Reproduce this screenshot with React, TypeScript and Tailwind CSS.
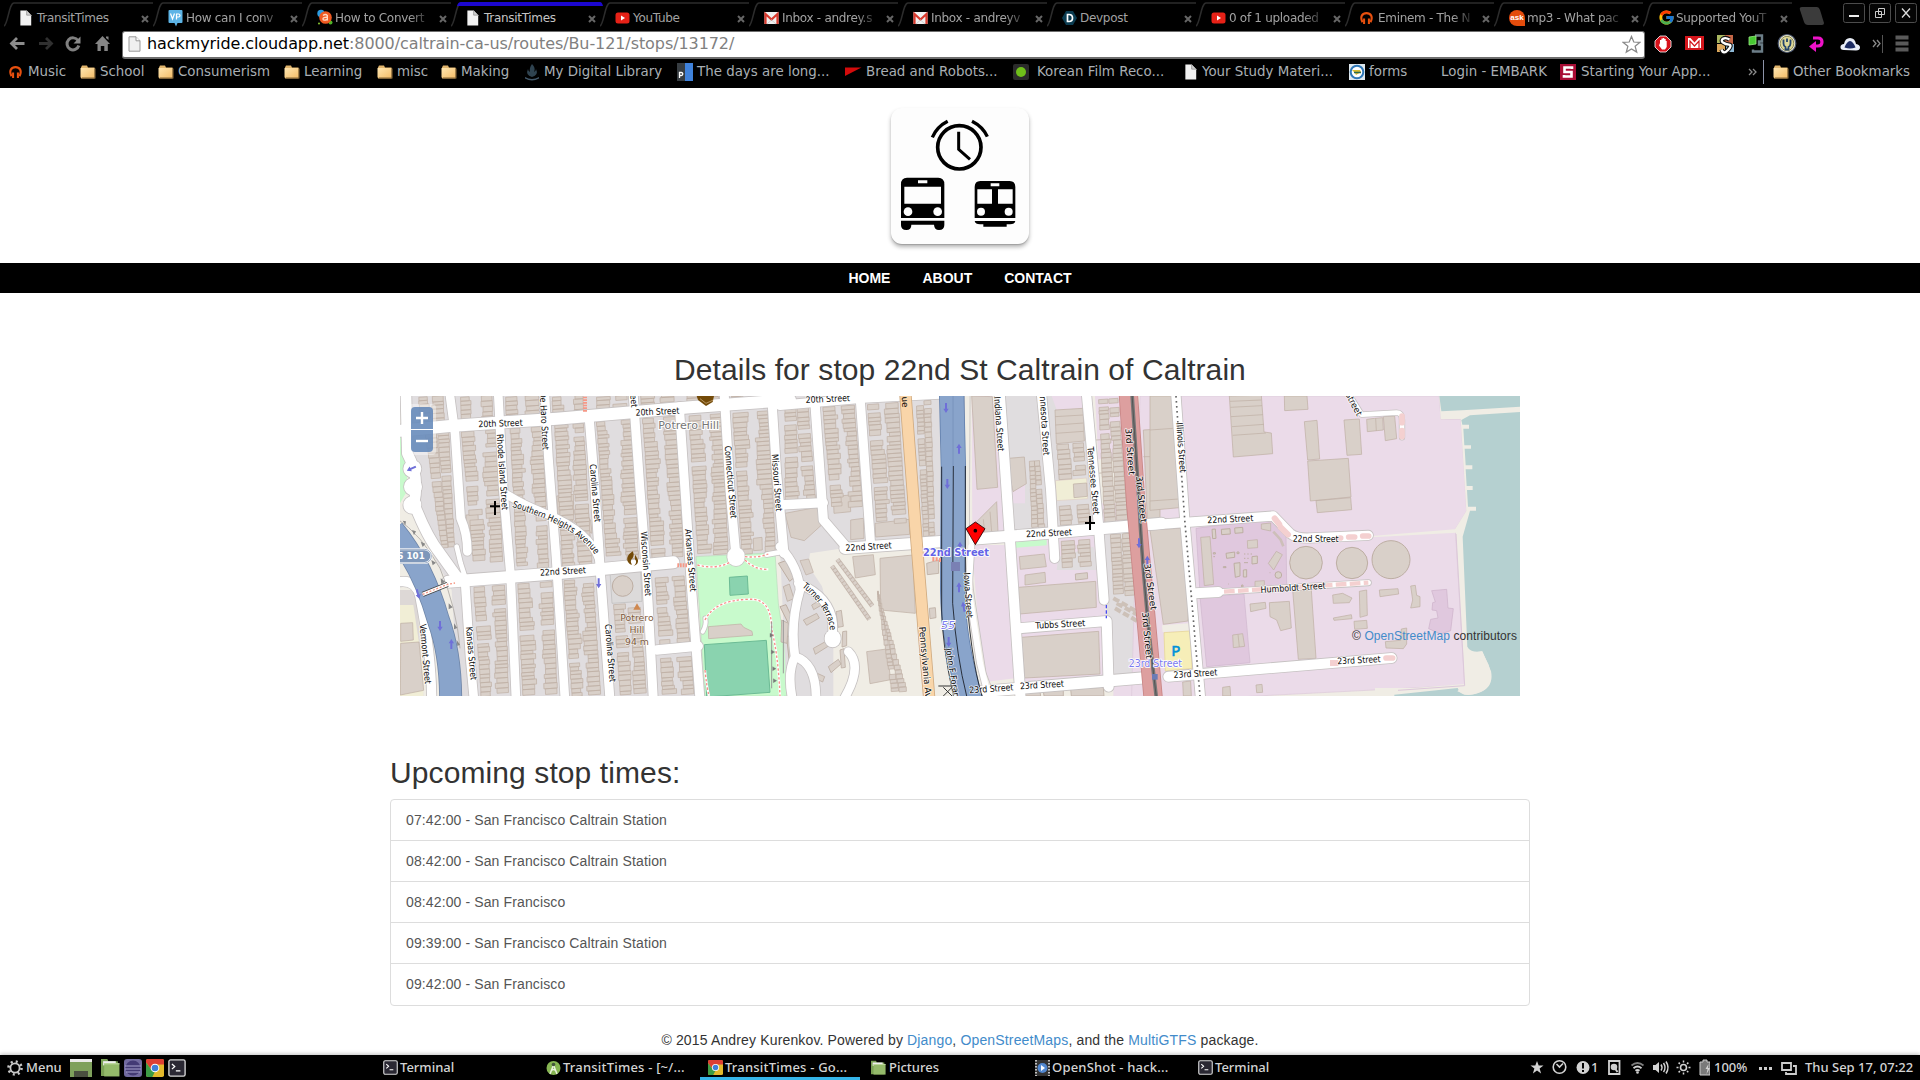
import React from "react";
import { FcGoogle } from "react-icons/fc";

/* ------------------------------------------------------------------ */
/* Small icons                                                         */
/* ------------------------------------------------------------------ */

const Page = ({ s = "#f2f2f2" }: { s?: string }) => (
  <svg width="13" height="16" viewBox="0 0 11 14" className="block">
    <path d="M1 .5h5.5L10.5 4.5v9H1z" fill={s} />
    <path d="M6.5.5v4h4" fill="#cfcfcf" stroke="#8a8a8a" strokeWidth=".6" />
  </svg>
);

const Folder = () => (
  <svg width="16" height="16" viewBox="0 0 16 16" className="block">
    <defs>
      <linearGradient id="fold" x1="0" y1="0" x2="1" y2="1">
        <stop offset="0" stopColor="#ffe6b0" />
        <stop offset="1" stopColor="#f3bd6a" />
      </linearGradient>
    </defs>
    <path d="M1 3.500 2 1.500h5l1 2h6.500v11H1z" fill="#e0b46c" />
    <path d="M.5 4h14v9.500h-14z" fill="url(#fold)" />
    <path d="M14.500 4.500h1v10H2v-1h12.500z" fill="#8d6c3a" />
  </svg>
);

const Headphones = () => (
  <svg width="13" height="16" viewBox="0 0 14 16" className="block">
    <path d="M2.700 12.500C-.6 6 3 2.800 7 2.800s7.600 3.200 4.300 9.700" fill="none" stroke="#e8500f" strokeWidth="2.300" />
    <path d="M3.300 8.500h2.200v6H3.300zM8.500 8.500h2.200v6H8.500z" fill="#e8500f" />
  </svg>
);

const YouTube = () => (
  <svg width="15" height="16" viewBox="0 0 15 16" className="block">
    <rect x=".5" y="2.500" width="14" height="11" rx="2.500" fill="#e62117" />
    <path d="M6 5.500v5l4-2.500z" fill="#fff" />
  </svg>
);

const Gmail = () => (
  <svg width="15" height="16" viewBox="0 0 15 16" className="block">
    <rect x=".5" y="2" width="14" height="12" fill="#f1f1f1" />
    <path d="M1.500 14V4l6 5.500 6-5.500v10" fill="none" stroke="#d93a2e" strokeWidth="2.200" />
    <path d="M3 14l4.500-4 4.500 4" fill="none" stroke="#cfcfcf" />
  </svg>
);

const VP = () => (
  <svg width="15" height="18" viewBox="0 0 15 18" className="block">
    <path d="M1.500 1h12q1 0 1 1v11q0 1-1 1H9.500L8 17.500 6.500 14h-5q-1 0-1-1V2q0-1 1-1z" fill="#5db4e6" />
    <path d="M2.500 4.500 4.500 10l2-5.500M8.500 10.500v-5.500h2q1.500 0 1.500 1.500T10.500 8h-2" fill="none" stroke="#fff" strokeWidth="1.200" />
  </svg>
);

const AMark = () => (
  <svg width="16" height="17" viewBox="0 0 16 17" className="block">
    <circle cx="4" cy="4.500" r="3.700" fill="#2a9be0" />
    <circle cx="13.500" cy="13.500" r="2" fill="#4fb526" />
    <circle cx="2" cy="14.500" r="1" fill="#8ac832" />
    <circle cx="8.500" cy="8.500" r="6.300" fill="#ef5a22" />
    <path d="M6 6.500q2.500-2 4.300 0v5M10.300 8.300q-4.300-.3-4.300 1.700t4.300.5" fill="none" stroke="#ffd9c4" strokeWidth="1.400" />
  </svg>
);

const Devpost = () => (
  <svg width="15" height="16" viewBox="0 0 15 16" className="block">
    <path d="M4 1h7l4 7-4 7H4L0 8z" fill="#0b3c51" />
    <path d="M5.500 4.500v7h1.500q3.500 0 3.500-3.500T7 4.500z" fill="none" stroke="#fff" strokeWidth="1.700" />
  </svg>
);

const Ask = () => (
  <span className="flex h-[16px] w-[16px] items-center justify-center rounded-full rounded-br-none bg-[#e44c0c] font-['Liberation_Sans'] text-[8px] font-bold leading-none text-white">
    ask
  </span>
);

const Chrome = ({ size = 18 }: { size?: number }) => (
  <svg width={size} height={size} viewBox="0 0 20 20" className="block">
    <rect width="20" height="20" rx="2" fill="#e3b92c" />
    <path d="M0 2Q0 0 2 0h16q2 0 2 2v4H10L6 12 0 4z" fill="#dd3f34" />
    <path d="M0 4l6 8 4 2-3 6H2q-2 0-2-2z" fill="#3d9c46" />
    <circle cx="10" cy="10" r="4.800" fill="#fff" />
    <circle cx="10" cy="10" r="3.700" fill="#3f7fd8" />
  </svg>
);

const TermIcon = ({ size = 16 }: { size?: number }) => (
  <svg width={size} height={size} viewBox="0 0 16 16" className="block">
    <rect x=".8" y=".8" width="14.400" height="14.400" rx="1.500" fill="#2a2833" stroke="#d8d8d8" strokeWidth="1.200" />
    <path d="M3.500 4.500 6 6.700 3.500 9M7 10.500h4" fill="none" stroke="#fff" strokeWidth="1.100" />
  </svg>
);

const GreenFolder = ({ size = 18 }: { size?: number }) => (
  <svg width={size} height={size} viewBox="0 0 18 18" className="block">
    <path d="M0 1h6l1 2h9v14H0z" fill="#7ba155" />
    <path d="M2 3h12v4H2z" fill="#eee" />
    <path d="M3 5h14.500v12.500H3z" fill="#94ba6a" />
    <path d="M3 5h14.500v1H3z" fill="#c2dba3" />
  </svg>
);

/* ------------------------------------------------------------------ */
/* Browser chrome                                                      */
/* ------------------------------------------------------------------ */

const tabs: { t: string; icon: React.ReactNode; on?: boolean; fade?: boolean }[] = [
  { t: "TransitTimes", icon: <Page /> },
  { t: "How can I conv", icon: <VP />, fade: true },
  { t: "How to Convert", icon: <AMark />, fade: true },
  { t: "TransitTimes", icon: <Page />, on: true },
  { t: "YouTube", icon: <YouTube /> },
  { t: "Inbox - andrey.s", icon: <Gmail />, fade: true },
  { t: "Inbox - andreyv", icon: <Gmail />, fade: true },
  { t: "Devpost", icon: <Devpost /> },
  { t: "0 of 1 uploaded", icon: <YouTube />, fade: true },
  { t: "Eminem - The N", icon: <Headphones />, fade: true },
  { t: "mp3 - What pac", icon: <Ask />, fade: true },
  { t: "Supported YouT", icon: <FcGoogle size={17} />, fade: true },
];

function Tab({ t, icon, on, fade }: { t: string; icon: React.ReactNode; on?: boolean; fade?: boolean }) {
  return (
    <div className="relative flex h-[33px] w-[149px] shrink-0 items-center pl-[15px] pt-[2px]">
      <svg width="156" height="33" viewBox="0 0 156 33" className="absolute left-0 top-0">
        <path d="M0 26C4 24 5 3 10 3H149" fill="none" stroke="#2c2c2c" strokeWidth="1.500" />
        {on && <path d="M6 6Q7 2 10 2H149Q151 2 152 6z" fill="#1c07cf" />}
      </svg>
      <span className="relative flex w-[17px] shrink-0">{icon}</span>
      <span
        className={
          "relative ml-px w-[98px] shrink-0 whitespace-nowrap text-[12px] tracking-[-0.3px] " +
          (on ? "text-[#c4c4c4]" : "text-[#a2a2a2]") +
          (fade ? " [mask-image:linear-gradient(to_right,black_76%,transparent_100%)]" : "")
        }
      >
        {t}
      </span>
      <svg width="8" height="8" viewBox="0 0 8 8" className="relative ml-[6px] mt-[2px] shrink-0">
        <path d="M1 1l6 6M7 1L1 7" stroke="#666" strokeWidth="2" />
      </svg>
    </div>
  );
}

const WinBtn = ({ children }: { children: React.ReactNode }) => (
  <svg width="22" height="20" viewBox="0 0 22 20" className="block">
    <rect x=".5" y=".5" width="21" height="19" rx="2" fill="#050505" stroke="#4c4c4c" />
    {children}
  </svg>
);

function TabStrip() {
  return (
    <div className="flex h-[30px] pl-[4px]">
      {tabs.map((x, i) => (
        <Tab key={i} {...x} />
      ))}
      <svg width="26" height="20" viewBox="0 0 26 20" className="ml-[7px] mt-[6px] shrink-0">
        <path d="M1 4Q0 1 3 1h15q2 0 3 3l4 13q0 2-2 2H9q-3 0-4-3z" fill="#3b3b3b" />
      </svg>
      <div className="ml-auto mr-[3px] mt-[3px] flex gap-[4px]">
        <WinBtn>
          <path d="M6 13h10" stroke="#eee" strokeWidth="2" />
        </WinBtn>
        <WinBtn>
          <path d="M9.500 5.500h6v6h-6zM6.500 8.500h6v6h-6z" fill="none" stroke="#ccc" />
        </WinBtn>
        <WinBtn>
          <path d="M7 5.500l8 9M15 5.500l-8 9" stroke="#ddd" strokeWidth="1.300" />
        </WinBtn>
      </div>
    </div>
  );
}

function Toolbar() {
  return (
    <div className="flex h-[29px] items-center">
      <svg width="122" height="29" viewBox="0 -4 122 29" className="shrink-0">
        <path d="M24.500 9.500H13M17 4l-5.500 5.500L17 15" fill="none" stroke="#8c8c8c" strokeWidth="2.800" />
        <path d="M39 9.500h11.500M46 4l5.500 5.500L46 15" fill="none" stroke="#303030" strokeWidth="2.800" />
        <path d="M78 6.500a6 6 0 1 0 .8 5" fill="none" stroke="#808080" strokeWidth="3" />
        <path d="M80.500 2.500v7h-7z" fill="#8a8a8a" />
        <path d="M102.500 2l7.500 8h-2.200v7h-3.500v-5h-3.500v5H97.500v-7H95zM106 2.500h2.500V6L106 4z" fill="#858585" />
      </svg>
      <div className="flex h-[28px] w-[1523px] items-center rounded-[3px] border border-b-2 border-[#6e6e6e] bg-white pl-[5px] pr-[3px]">
        <svg width="13" height="16" viewBox="0 0 13 16">
          <path d="M1 .8h7l4 4v10.400H1z" fill="#f0f0f0" stroke="#999" />
          <path d="M8 .8v4h4" fill="#fff" stroke="#999" />
        </svg>
        <span className="ml-[6px] whitespace-nowrap text-[16px] leading-none tracking-[-0.085px] text-[#808080]">
          <span className="text-black">hackmyride.cloudapp.net</span>:8000/caltrain-ca-us/routes/Bu-121/stops/13172/
        </span>
        <svg width="19" height="19" viewBox="0 0 20 20" className="ml-auto">
          <path d="M10 1.500l2.400 5.900 6.300.4-4.900 4 1.700 6.200L10 14.600 4.500 18l1.700-6.200-4.900-4 6.300-.4z" fill="#fff" stroke="#888" strokeWidth="1.300" />
        </svg>
      </div>
      <svg width="275" height="29" viewBox="0 -4 275 29" className="shrink-0">
        <g transform="translate(10 1)">
          <path d="M5 1h6l5 5v6l-5 5H5l-5-5V6z" fill="#d6121b" stroke="#fff" strokeWidth=".8" />
          <path d="M5 8V5h1.400V3.500h1.500V3h1.400v1h1.400v2h1v6l-1.700 2.500H7L4 10.500z" fill="#fff" />
        </g>
        <g transform="translate(40 2)">
          <rect width="19" height="14" fill="#d4161c" />
          <path d="M3 2h2.500l4 4.500 4-4.500H16v10H3z" fill="#fff" />
          <path d="M5 12V5l4.500 5L14 5v7" fill="none" stroke="#d4161c" strokeWidth="1.200" />
        </g>
        <g transform="translate(72 1)">
          <rect width="8" height="8" fill="#a9b760" />
          <rect x="8" width="8" height="9" fill="#c66748" />
          <rect y="9" width="8" height="8" fill="#dca85c" />
          <rect x="9" y="9" width="8" height="8" fill="#8db8d6" />
          <path d="M12.500 4.500q-4-2.500-6.500-.7t0 3.700 6 2.200-1 5.300-6.500-.5" fill="none" stroke="#111" strokeWidth="4.500" />
          <path d="M12.500 4.500q-4-2.500-6.500-.7t0 3.700 6 2.200-1 5.300-6.500-.5" fill="none" stroke="#fff" strokeWidth="2.300" />
        </g>
        <g transform="translate(103 0)">
          <path d="M7 1.500h7v6h-3v3h3v7H5v-2" fill="none" stroke="#6c7e88" strokeWidth="2.400" />
          <path d="M1 3l7-1v8l-7 1z" fill="#47c832" stroke="#9bea83" strokeWidth=".8" />
        </g>
        <g transform="translate(132 0)">
          <ellipse cx="10" cy="9.500" rx="8.800" ry="9" fill="#f1edd0" stroke="#4c5870" strokeWidth="1.200" />
          <ellipse cx="10" cy="9.500" rx="6.800" ry="7.200" fill="#dfd998" stroke="#8c8b58" />
          <path d="M6.500 5.500v4q0 2.500 2 3.500v2.500h3V13q2-1 2-3.500v-4M10 4.500V8" fill="none" stroke="#24456d" strokeWidth="1.800" />
        </g>
        <path d="M168 4h5q4 0 4 4t-4 4h-4" fill="none" stroke="#ee12c8" strokeWidth="3.200" />
        <path d="M171 7v11l-7-5.500z" fill="#ee12c8" />
        <g transform="translate(195 3)">
          <path d="M4 13Q0 13 .5 9.500 1 7 4 7q1-6 6-6t6 6q4 .5 4 3.500t-4 3z" fill="#e9eef8" />
          <path d="M4.500 10.500Q7 4 10 4t5.500 6.500q-5.500 2-11 0z" fill="#1d2c63" />
        </g>
        <path d="M228 6l3 3.500-3 3.500M232 6l3 3.500-3 3.500" fill="none" stroke="#8b8b8b" strokeWidth="1.300" />
        <path d="M237.500 1v18" stroke="#555" />
        <path d="M250.500 3.500h13M250.500 9.500h13M250.500 15.500h13" stroke="#5a5a5a" strokeWidth="4" />
      </svg>
    </div>
  );
}

const bookmarks: { t: string; w: string; g: string; icon: React.ReactNode }[] = [
  { t: "Music", w: "w-[71px]", g: "w-[19px]", icon: <Headphones /> },
  { t: "School", w: "w-[78px]", g: "w-[20px]", icon: <Folder /> },
  { t: "Consumerism", w: "w-[126px]", g: "w-[20px]", icon: <Folder /> },
  { t: "Learning", w: "w-[93px]", g: "w-[20px]", icon: <Folder /> },
  { t: "misc", w: "w-[64px]", g: "w-[20px]", icon: <Folder /> },
  { t: "Making", w: "w-[84px]", g: "w-[20px]", icon: <Folder /> },
  {
    t: "My Digital Library",
    w: "w-[152px]",
    g: "w-[19px]",
    icon: (
      <svg width="14" height="18" viewBox="0 0 14 18">
        <path d="M7 1q4 4 2 8 2-1 2-3 3 6-4 8-7-2-4-8 0 2 2 3Q4 5 7 1z" fill="#2f4350" />
        <path d="M0 14q7 4 14 0v1.500q-7 4-14 0z" fill="#42586a" />
      </svg>
    ),
  },
  {
    t: "The days are long...",
    w: "w-[168px]",
    g: "w-[20px]",
    icon: (
      <svg width="16" height="18" viewBox="0 0 16 18">
        <rect width="8" height="18" fill="#373d42" />
        <rect x="8" width="8" height="18" fill="#3f82dc" />
        <path d="M2.500 15V9.500h1.800q1.500 0 1.500 1.500T4.300 12.500H2.500" fill="none" stroke="#fff" strokeWidth="1.300" />
      </svg>
    ),
  },
  {
    t: "Bread and Robots...",
    w: "w-[168px]",
    g: "w-[21px]",
    icon: (
      <svg width="17" height="16" viewBox="0 0 17 16">
        <path d="M0 3.500h16.500L0 12z" fill="#d40b0b" />
      </svg>
    ),
  },
  {
    t: "Korean Film Reco...",
    w: "w-[171px]",
    g: "w-[24px]",
    icon: (
      <svg width="16" height="16" viewBox="0 0 16 16">
        <rect width="16" height="16" rx="2" fill="#2b2b2b" />
        <circle cx="8" cy="8" r="5" fill="#6fbf1a" />
      </svg>
    ),
  },
  { t: "Your Study Materi...", w: "w-[165px]", g: "w-[18px]", icon: <Page /> },
  {
    t: "forms",
    w: "w-[74px]",
    g: "w-[20px]",
    icon: (
      <svg width="16" height="16" viewBox="0 0 16 16">
        <rect width="16" height="16" fill="#dfe8ee" />
        <circle cx="8" cy="8" r="6.300" fill="#fff" stroke="#2e77b8" strokeWidth="2" />
        <path d="M3 6h8l1 2-5 3-1-2z" fill="#d8bd33" />
        <path d="M5 8.500h7" stroke="#2d6a4f" strokeWidth="1.500" />
      </svg>
    ),
  },
  { t: "Login - EMBARK", w: "w-[137px]", g: "w-[18px]", icon: null },
  {
    t: "Starting Your App...",
    w: "w-[189px]",
    g: "w-[21px]",
    icon: (
      <svg width="16" height="16" viewBox="0 0 16 16">
        <rect width="16" height="16" fill="#a80d35" />
        <path d="M12 5V3.500H4.500V8h7v4.500H4V11" fill="none" stroke="#fff" strokeWidth="2.600" />
      </svg>
    ),
  },
];

function Bookmarks() {
  return (
    <div className="flex h-[24px] items-center pl-[9px] text-[13.400px] text-[#a9afb4]">
      {bookmarks.map((b) => (
        <div key={b.t} className={"flex shrink-0 items-center " + b.w}>
          <span className={"shrink-0 " + b.g}>{b.icon}</span>
          <span className="whitespace-nowrap">{b.t}</span>
        </div>
      ))}
      <svg width="10" height="10" viewBox="0 0 10 10" className="-ml-px shrink-0">
        <path d="M1 2l3 3-3 3M5 2l3 3-3 3" fill="none" stroke="#8b8b8b" strokeWidth="1.300" />
      </svg>
      <span className="ml-[5px] h-[24px] w-px bg-[#8c93a8]" />
      <span className="ml-[9px] w-[20px] shrink-0">
        <Folder />
      </span>
      <span className="whitespace-nowrap">Other Bookmarks</span>
    </div>
  );
}

/* ------------------------------------------------------------------ */
/* Logo                                                                */
/* ------------------------------------------------------------------ */

const Logo = () => (
  <svg width="140" height="137" viewBox="2 1 420 411" className="block overflow-visible">
    <g fill="none" stroke="#000">
      <circle cx="207" cy="119" r="65" strokeWidth="11" />
      <path d="M205 72v53l34 30" strokeWidth="9" />
      <path d="M126 89q14-32 46-48M291 87q-14-30-46-46" strokeWidth="10" />
    </g>
    <path d="M32 331V230q0-20 18-20h94q18 0 18 20v101z" />
    <path d="M32 339h130v13q0 15-16 15-14 0-15-16H63q0 16-15 16-16 0-16-15z" />
    <g fill="#fdfdfd">
      <path d="M42 237h110v51H42zM83 218h28v9H83z" />
      <circle cx="53" cy="312" r="13" />
      <circle cx="142" cy="312" r="13" />
    </g>
    <path d="M253 331V238q0-18 17-18h88q17 0 17 18v93zM253 340h122q-2 10-16 10h-10v7h-70v-7h-10q-14 0-16-10z" />
    <g fill="#fdfdfd">
      <path d="M261 245h44v43h-44zM323 245h44v43h-44zM301 227h26v9h-26z" />
      <circle cx="272" cy="312" r="12" />
      <circle cx="355" cy="312" r="12" />
    </g>
  </svg>
);

/* ------------------------------------------------------------------ */
/* Map: units are thirds of a pixel, in three side-by-side frames      */
/* ------------------------------------------------------------------ */

const FRAMES = ["translate(-30 -18)", "translate(1140 -18)", "translate(2250 -18)"];

let seed = 7;
const rnd = () => {
  seed = (seed * 16807) % 2147483647;
  return seed / 2147483647;
};

/* A row of houses along both long sides of a city block. */
function houses(tl: number, tr: number, bl: number, br: number, yt: number, yb: number, slope = 0.07) {
  let d = "";
  const h = yb - yt;
  const f = (n: number) => n.toFixed(1);
  for (const side of [0, 1]) {
    let y = yt + 4;
    let run = 0;
    let base = 30;
    while (y < yb - 8) {
      if (run-- <= 0) {
        base = 24 + rnd() * 14;
        run = 2 + rnd() * 5;
      }
      const s = 10 + rnd() * 7;
      const k = (y - yt) / h;
      const l = tl + (bl - tl) * k + 5;
      const r = tr + (br - tr) * k - 5;
      const w = Math.min((r - l) * 0.46, base + rnd() * 9);
      const gap = rnd() * 2;
      const x = side ? r - gap - w : l + gap;
      const yy = y - slope * (x - l);
      if (rnd() > 0.05) d += `M${f(x)} ${f(yy)}l${f(w)} ${f(-w * slope)}l.5 ${f(s)}l${f(-w)} ${f(w * slope)}z`;
      y += s;
    }
  }
  return d;
}

type Block = [number, number, number, number, number, number, number];
const blocks: Block[] = [
  [0, 205, 312, 207, 314, 18, 95], [0, 340, 452, 343, 455, 18, 85], [0, 480, 585, 482, 586, 18, 72],
  [0, 614, 716, 615, 718, 18, 62], [0, 745, 858, 747, 860, 12, 48], [0, 884, 990, 885, 991, 8, 40],
  [0, 1018, 1130, 1019, 1131, 5, 38], [0, 80, 165, 84, 170, 18, 110],
  [0, 100, 182, 150, 200, 125, 480],
  [0, 208, 324, 245, 345, 122, 520],
  [0, 355, 463, 375, 482, 112, 535],
  [0, 488, 586, 512, 612, 102, 528],
  [0, 614, 733, 645, 752, 92, 520],
  [0, 752, 868, 780, 886, 82, 510],
  [0, 890, 1003, 918, 1020, 74, 498],
  [0, 1022, 1140, 1050, 1163, 66, 490],
  [0, 245, 350, 268, 362, 588, 918], [0, 378, 492, 392, 508, 578, 918],
  [0, 515, 615, 540, 638, 568, 918], [0, 665, 755, 685, 775, 640, 918],
  [0, 790, 888, 803, 906, 560, 765], [0, 805, 910, 812, 918, 802, 918],
  [1, 8, 90, 10, 112, 52, 328],
  [1, 122, 228, 150, 254, 48, 350],
  [1, 256, 360, 285, 385, 40, 400],
  [1, 402, 458, 425, 470, 30, 440],
  [1, 825, 915, 832, 925, 160, 262],
  [1, 832, 930, 835, 940, 345, 410],
  [1, 742, 785, 750, 800, 210, 420],
  [1, 950, 1020, 968, 1050, 25, 400],
  [1, 985, 1060, 995, 1070, 430, 620],
  [1, 838, 935, 840, 940, 450, 535],
  [1, 285, 300, 330, 390, 600, 910],
];
const houseData = [0, 1, 2].map((f) =>
  blocks.filter((b) => b[0] === f).map((b) => houses(b[1], b[2], b[3], b[4], b[5], b[6])).join("")
);

const bigBuildings = [
  "M500 318l50-5 2 62-48 8zM552 395q20-40 50-5l4 40zM955 710l98-8 8 10 25 12 2 12-132 10zM1090 445l26-3 1 38-26 2zM228 375l36-2 2 40-36 2zM32 760l55-4 14 145-70 14zM32 700l36-2 2 52-38 4z",
  "M285 400l102-12 2 45-102 8zM300 505l98-10 8 175-104-10zM15 370l95-18 18 50-55 50-40-10zM260 785l60-8 12 92-62 12zM218 500l62-6 6 60-60 10zM575 18l62 2 16 272-62 6zM685 205l48-4 6 80-40 24-8-40zM590 395l60-60 4 90-66 6zM718 500l75-8 6 38-78 8zM735 555l60-8 2 30-62 8zM715 592l232-18 2 78-230 20zM724 742l232-18 4 128-226 12zM825 60l84-5 4 98-84 8zM880 282l40-3 2 40-40 4zM1090 120l50-3v270l-38 2zM212 390l38-5 2 60-40 4zM160 320l50-5 2 50-50 5zM60 512l26-5 14 40-22 8z",
  "M0 18h66l22 335-88 8zM0 420l118-7-4 280-74 10zM238 18l96-2 8 110 22 3 4 62-118 10zM403 18h68l3 40-70 4zM463 95l38-4 8 116-36 3zM582 90l46-3 7 106-44 3zM473 213l122-8 8 116-122 12zM498 332l104-9 3 36-103 9zM650 88l24-3 24-2 2 37-48 5zM700 80l34-2 6 68-34 6zM152 442l28-2 11 143-28 4zM428 600l56 0 14 205-53 3zM358 638l60-4 6 80-32 8-12-32-20-10zM300 642l46-5 2 18-46 10zM98 876l24-3 2 45h-24zM218 892l22-3 2 29h-24zM318 885l18-2 2 24-18 1zM688 600l56-4 2 16-56 8zM782 588l14-2 4 30 10 4v30l-28 4 6-24zM612 694l38-3 2 24-38 3zM706 755l46-4 2-34 16-3v48l-10 14-52-2zM248 735l30-4 6 38-34 4zM292 452l30-3 1 24-30 2zM355 520l24-36 18 10-26 46zM334 402l28-3v24l-28-6zM548 615l30-5 28 14-8 14-48 2zM628 604l22-4 2 76-22 6zM550 684l54-10 2 12-54 5zM315 574l28-2v16l-28 3z",
];

const gridlines = [
  "",
  "M825 80l84-5M826 105l84-6M827 130l84-6M610 388l4 40M630 365l5 60M1090 200h50M948 150l70-4M952 250l70-6",
  "M240 34l94-4M241 52l95-5M243 80l96-6M246 110l96-7M248 136l100-7M0 333l86-6M0 120l70-5M677 85l2 38M264 733l4 38",
];

type Road = [number, string, number, string?];
const roads: Road[] = [
  [0, "M48 18L52 190Q90 260 72 340Q110 440 150 490L200 560L225 572", 32],
  [0, "M66 236h2M68 290h2M66 345h2", 52],
  [0, "M30 122L180 108L500 86L900 52L1200 30", 36],
  [0, "M180 18L195 130L212 385Q232 430 232 484", 26],
  [0, "M200 470L212 520L225 560", 14],
  [0, "M325 18L340 300L362 560L378 930", 26],
  [0, "M465 18L475 200L498 500L525 930", 26],
  [0, "M598 90L615 300L632 560L660 930", 27],
  [0, "M730 18L750 300L770 560L790 930", 27],
  [0, "M868 50L885 300L905 600L930 930", 27],
  [0, "M1003 18L1020 300L1038 500", 27],
  [0, "M1145 18L1160 250L1182 490", 27],
  [0, "M225 572L240 800L252 930", 26],
  [0, "M175 575L500 550L850 517", 36],
  [0, "M800 780L925 768", 28],
  [0, "M348 312Q400 345 470 372Q600 425 628 510", 24],
  [0, "M30 575Q80 570 90 620Q125 800 125 930", 28],
  [0, "M1038 498L1038 502", 52],
  [0, "M1130 494L1180 485", 14],
  [0, "M938 725Q950 705 946 685", 12],
  [1, "M0 46L250 24L480 12", 28],
  [1, "M105 40L130 390L200 472", 28],
  [1, "M240 18L272 465", 27],
  [1, "M0 345L130 338", 28],
  [1, "M0 470Q55 530 60 600Q30 700 45 800Q110 820 108 930M55 580Q150 620 158 700L158 748M45 800Q20 850 38 930M205 785Q250 830 190 930", 26],
  [1, "M158 744L158 748", 48],
  [1, "M660 18L688 420L722 930", 30],
  [1, "M785 18L812 300L824 505", 28],
  [1, "M920 18L955 400L972 630", 28],
  [1, "M195 475L480 455L800 430L1145 400", 34],
  [1, "M562 18L560 440L572 600L610 850L640 930", 14, "#f0ede5"],
  [1, "M574 470L566 600L600 820L620 900", 18],
  [1, "M716 715L980 693L986 890", 30],
  [1, "M600 905L1110 862", 34],
  [2, "M78 18L105 400L152 930", 28],
  [2, "M0 405L370 378L420 430Q440 446 480 444L655 436", 28],
  [2, "M135 610L205 606", 30],
  [2, "M205 606L655 578", 16],
  [2, "M55 860L725 804", 30],
  [2, "M595 10L635 74L740 68Q756 68 756 90L756 142", 14],
];

type LabelT = [number, string, number, number, number, number];
const labels: LabelT[] = [
  [0, "20th Street", 265, 104, 398, 99],
  [0, "20th Street", 737, 69, 868, 63],
  [0, "Rhode Island Street", 328, 132, 344, 360],
  [0, "De Haro Street", 457, 5, 466, 180],
  [0, "Carolina Street", 607, 222, 622, 396],
  [0, "Carolina Street", 653, 702, 667, 876],
  [0, "Wisconsin Street", 760, 425, 774, 618],
  [0, "Arkansas Street", 893, 417, 909, 605],
  [0, "Connecticut Street", 1012, 167, 1030, 385],
  [0, "Missouri Street", 1153, 192, 1166, 364],
  [0, "Kansas Street", 236, 710, 250, 870],
  [0, "Vermont Street", 97, 702, 113, 882],
  [0, "22nd Street", 450, 549, 588, 541],
  [0, "Street", 726, -20, 732, 52],
  [1, "20th Street", 77, 31, 210, 25],
  [1, "22nd Street", 197, 475, 335, 467],
  [1, "22nd Street", 738, 434, 876, 427],
  [1, "Indiana Street", 650, 20, 662, 184],
  [1, "Minnesota Street", 786, -8, 798, 196],
  [1, "Tennessee Street", 930, 170, 948, 374],
  [1, "Iowa Street", 559, 548, 568, 684],
  [1, "3rd Street", 1044, 115, 1054, 255],
  [1, "3rd Street", 1076, 258, 1090, 398],
  [1, "3rd Street", 1100, 520, 1120, 660],
  [1, "3rd Street", 1094, 666, 1106, 806],
  [1, "Pennsylvania Avenue", 425, 710, 450, 990],
  [1, "John F Foran Freeway", 505, 775, 545, 1030],
  [1, "Tubbs Street", 766, 708, 916, 700],
  [1, "23rd Street", 568, 902, 700, 893],
  [1, "23rd Street", 720, 890, 852, 882],
  [2, "Illinois Street", 87, 98, 98, 248],
  [2, "22nd Street", 172, 392, 310, 385],
  [2, "22nd Street", 428, 447, 566, 448],
  [2, "Humboldt Street", 332, 601, 527, 588],
  [2, "23rd Street", 562, 815, 692, 808],
  [2, "23rd Street", 71, 856, 202, 848],
  [2, "Street", 592, 8, 628, 76],
];

function Label({ l }: { l: LabelT }) {
  const [, t, x1, y1, x2, y2] = l;
  const a = (Math.atan2(y2 - y1, x2 - x1) * 180) / Math.PI;
  const len = Math.hypot(x2 - x1, y2 - y1);
  return (
    <text
      transform={`translate(${x1} ${y1}) rotate(${a})`}
      y="8"
      textLength={len}
      lengthAdjust="spacingAndGlyphs"
      fontSize="27"
      fill="#0a0a0a"
      stroke="#fff"
      strokeOpacity=".75"
      strokeWidth="5"
      paintOrder="stroke"
      strokeLinejoin="round"
    >
      {t}
    </text>
  );
}

const Arrow = ({ x, y, r = 0 }: { x: number; y: number; r?: number }) => (
  <path transform={`translate(${x} ${y}) rotate(${r})`} d="M-3-15h6V2h5L0 15-8 2h5z" fill="#6f6fd8" />
);

const CityMap = () => (
  <svg width="1120" height="300" viewBox="0 0 3360 900" className="block" fontFamily="'DejaVu Sans', sans-serif">
    <rect width="3360" height="900" fill="#f0ede5" />

    {/* land use */}
    <g transform={FRAMES[0]}>
      <path d="M60 18H1250V490L920 500 930 918H205L185 600 60 360z" fill="#e0dddf" />
      <path d="M30 140h15l8 160-23 40z" fill="#c8facc" />
      <path d="M30 600h50l20 318H30z" fill="#ddd8d6" />
      <path d="M30 645h40l30 200v73H30z" fill="#f1eed6" />
      <path d="M918 500L1155 488 1165 640 1205 918H945z" fill="#c8facc" stroke="#b9dcbc" strokeWidth="2" />
      <path d="M660 548l92-4 4 90-90 6z" fill="#dcdada" stroke="#bbb" strokeWidth="2" />
    </g>
    <g transform={FRAMES[1]}>
      <path d="M-20 18H480V440L290 460 90 490 80 560 20 480z" fill="#e0dddf" />
      <path d="M0 480l60 10 100 150v278H20z" fill="#e0dddf" />
      <path d="M0 680l12 238H0z" fill="#c8facc" />
      <path d="M90 495L410 470 435 918H200L120 560z" fill="#f0ede5" />
      <path d="M575 18h62l60 400-120 20zM575 465h110l20 400-95 12zM700 440l270-18 10 440-260 20z" fill="#ebdbe9" />
      <path d="M665 18h255l30 400-250 20zM835 500l105-30 20 70-130 0z" fill="#e0dddf" />
      <path d="M815 18h100l-4 40-80 4zM945 18h80l10 190-80 0zM950 340h100v70h-95zM690 280h45v60h-40z" fill="#ebdbe9" />
      <path d="M970 420h90l40 460H990z" fill="#e0dddf" />
      <path d="M1000 880h110v40h-110z" fill="#ebdbe9" />
      <path d="M826 272l94-8 3 62-94 6z" fill="#f0eed6" stroke="#e0cfc6" strokeWidth="2" />
      <path d="M700 455l100-7v18l-98 8z" fill="#c8facc" />
    </g>
    <g transform={FRAMES[2]}>
      <path d="M-30 18H868l5 70 60 0 17 275-34 55 28 468-780 40-220 20z" fill="#ebdbe9" stroke="#dcc8da" strokeWidth="2" />
      <path d="M138 415l240-30 30 50 2 150-70 15-190 10zM150 620l132-8 18 206-130 12z" fill="#e0c8de" stroke="#cfb6cd" strokeWidth="2" />
      <path d="M845 602l45-4 4 56 16 2-8 66-30 10-36-16 6-28 22-4-4-22-14-2 2-22 8-2z" fill="#e0c8de" stroke="#cbb0c9" strokeWidth="2" />
      <path d="M868 18l4 70 60-2 17 277-34 55-250 20v4l254-14 26 454-150 12h-120v24h340V18z" fill="#f0ede5" />
      <path d="M868 18H1112V50L950 60 874 64z" fill="#b5d0d0" />
      <path d="M1112 66L960 76 934 90l3 14h20v12h-17l3 50h20v10h-19l3 50h20v12h-20l3 50h18v12h-17l3 50h24v12h-18L938 440l14 330q10 20 45 14l26 60q10 50-40 66t-60-16l-190 20v14h380z" fill="#b5d0d0" />
      <path d="M944 772q20 20 52 12l20 40q20 60-20 80t-74 0l20-20z" fill="#f0ede5" />
      <path d="M918 432l26 455-200 14" stroke="#dcc8da" strokeWidth="3" fill="none" />
      <path d="M36 706l80-6v22l-78 4z" fill="#f0ede5" />
      <path d="M42 728l78-5 6 112-80 8z" fill="#f6eeb8" stroke="#e6d58c" strokeWidth="2" />
    </g>

    {/* buildings */}
    {[0, 1, 2].map((f) => (
      <g key={f} transform={FRAMES[f]} fill="#d9d0c9" stroke="#c0b1a6" strokeWidth="2.200">
        <path d={bigBuildings[f]} />
        <path d={gridlines[f]} />
        <path d={houseData[f]} />
      </g>
    ))}
    <g transform={FRAMES[0]} fill="#d9d0c9" stroke="#bdaea3" strokeWidth="3">
      <circle cx="698" cy="588" r="31" />
      <path d="M1165 520l22-8 26 50-14 12zM1170 650l18-6 28 60-14 10zM1190 740l16-4 8 80-16 2z" />
    </g>
    <g transform={FRAMES[1]} fill="#d9d0c9" stroke="#bdaea3" strokeWidth="2.500">
      <path d="M10 590l18-8 14 44-20 8zM80 575l40 32-8 14-42-30zM168 665l16-4 6 48-16 3zM95 645l34-20 6 14-34 20zM70 690l40-20 8 14-38 22zM100 775l36-20 8 14-38 24zM90 840l44 20-6 16-44-22zM145 830l30-22 8 14-30 26zM188 725l12-2v44l-14 4zM180 780l12-4 4 56-12 2zM448 655l18-2 2 30-18 3zM440 520l36-10v40l-34 4zM5 690l20 10-4 60-18-4z" />
      <path d="M1000 625l90 50M1010 640l80 44M1005 655l70 40" strokeWidth="12" stroke="#cdc1b8" strokeDasharray="20 8" />
      <path d="M156 528l112 160M172 508l105 140" strokeWidth="14" stroke="#c5b7ad" />
      <path d="M156 528l112 160M172 508l105 140" strokeWidth="9" stroke="#d9d0c9" strokeDasharray="9 3" />
      <path d="M886 552l36-4 1 18-36 4zM726 918l-2-8 56-5 2 13zM790 903l60-5v20h-58zM872 898l98-6 2 26h-98z" />
    </g>
    <g transform={FRAMES[2]} fill="#d9d0c9" stroke="#bdaea3" strokeWidth="3">
      <circle cx="468" cy="518" r="49" />
      <circle cx="606" cy="519" r="47" />
      <circle cx="723" cy="509" r="57" />
      <circle cx="385" cy="555" r="10" />
      <path d="M186 418l10-1 2 28-10 1zM214 418l26-2 1 16-26 2zM254 414l24-2 1 16-24 2zM228 490l26-4v16l-24 3zM252 520l18-2v40l-14 4zM306 500l16-2v22l-16 2zM280 540l10-1v22h-10z" />
      <path d="M190 488h6v4h-6zM261 486h6v5h-6zM220 530h8v3h-8zM282 492h4M292 492h4M282 505h4M292 505h4M302 492h4M282 518h12M234 582h2M275 585h4v6h-4zM359 548h2M190 500h5" />
      <path d="M370 425l22 24 8 20" fill="none" strokeWidth="8" stroke="#cdbfb9" />
    </g>

    {/* sports grounds */}
    <g transform={FRAMES[0]} fill="#8ad3af" stroke="#6cbb95" strokeWidth="3">
      <path d="M1018 562l54-4 3 54-55 4zM943 764l186-13 11 156-190 14z" />
    </g>

    {/* streets */}
    {roads.map((r, i) => (
      <path key={"c" + i} transform={FRAMES[r[0]]} d={r[1]} fill="none" stroke="#c6c2c2" strokeWidth={r[2] + 5} strokeLinecap="round" strokeLinejoin="round" />
    ))}
    {roads.map((r, i) => (
      <path key={"f" + i} transform={FRAMES[r[0]]} d={r[1]} fill="none" stroke={r[3] || "#fff"} strokeWidth={r[2]} strokeLinecap="round" strokeLinejoin="round" />
    ))}

    {/* motorways, tram line and main roads */}
    <g transform={FRAMES[0]} fill="none">
      <path d="M20 385q75 50 130 150 50 120 60 240" stroke="#b8b4b0" strokeWidth="3" />
      <path d="M38 392l10 2-2 12zM66 420l12 4-6 12zM92 455l14 6-8 10zM124 510l14 8-10 8zM152 565l14 10-12 8zM176 640l12 12-12 6zM192 700l10 14-10 4zM200 750l10 14-8 4z" fill="#888" />
      <path d="M10 420Q100 530 145 690Q182 790 182 930" stroke="#6f86a8" strokeWidth="69" />
      <path d="M10 420Q100 530 145 690Q182 790 182 930" stroke="#89a4cb" strokeWidth="64" />
      <path d="M98 613l75-30" stroke="#444" strokeWidth="15" />
      <path d="M98 613l75-30" stroke="#fff" strokeWidth="11" />
      <path d="M98 613l75-30 22-4" stroke="#f69886" strokeWidth="4" strokeDasharray="6 5" />
      <path d="M922 525q60 15 100-10M1065 500q40 4 70-8M1065 510q30 30 70 28M945 690q30-60 130-62 70-6 70 90 20 80 25 200M945 840q5 50 12 78" stroke="#fff" strokeWidth="7" />
      <path d="M922 525q60 15 100-10M1065 500q40 4 70-8M1065 510q30 30 70 28M945 690q30-60 130-62 70-6 70 90 20 80 25 200M945 840q5 50 12 78" stroke="#f68e88" strokeWidth="4" strokeDasharray="7 6" />
      <path d="M862 526h30M585 20v46" stroke="#f69886" strokeWidth="12" strokeDasharray="5 3" />
      <path d="M1145 695v200M1180 690v160" stroke="#999" strokeWidth="3" />
      <path d="M1140 730l10 6-10 6zM1144 780l10 6-10 6zM1148 830l10 6-10 6zM1150 866l10 6-10 6z" fill="#777" stroke="#777" />
    </g>
    <g transform={FRAMES[1]} fill="none">
      <path d="M376 10L410 460 448 930" stroke="#d0ab80" strokeWidth="37" />
      <path d="M376 10L410 460 448 930" stroke="#f9d5a9" strokeWidth="32" />
      <path d="M515 10L520 230 518 600Q520 760 575 940" stroke="#6380ad" strokeWidth="76" />
      <path d="M515 10L520 230 518 600Q520 760 575 940" stroke="#89a4cb" strokeWidth="71" />
      <path d="M485 230V660Q486 760 520 918M556 228V560Q570 800 606 918M520 228L518 640Q530 800 560 918" stroke="#14181f" strokeWidth="2.500" />
      <path d="M519 18v210" stroke="#6f8bb5" strokeWidth="2" />
      <path d="M1045 10L1068 350 1120 930" stroke="#c98686" strokeWidth="58" />
      <path d="M1045 10L1068 350 1120 930" stroke="#dd9f9f" strokeWidth="53" />
      <path d="M1056 10L1078 350Q1090 600 1130 930" stroke="#777" strokeWidth="11" />
      <path d="M1056 10L1078 350Q1090 600 1130 930" stroke="#555" strokeWidth="3" />
      <path d="M979 645v40" stroke="#4a4af0" strokeWidth="4" strokeDasharray="10 6" />
      <path d="M460 500v14M470 502v12M480 504v12" stroke="#f69886" strokeWidth="6" />
    </g>
    <g transform={FRAMES[2]} fill="none">
      <path d="M78 18L105 400L150 918" stroke="#666" strokeWidth="5" strokeDasharray="5 10" />
      <path d="M374 385l14 18M392 412l22 22" stroke="#f4d0d0" strokeWidth="18" strokeLinecap="round" />
      <path d="M570 444h2M596 441h18M638 438h18M708 804h20M756 78v20M756 122v18" stroke="#f4d0d0" strokeWidth="17" strokeLinecap="round" />
      <path d="M222 605L655 578" stroke="#f4d0d0" strokeWidth="13" strokeDasharray="32 10" />
      <path d="M540 819h25" stroke="#f4d0d0" strokeWidth="18" />
    </g>

    {/* one-way arrows */}
    <g transform={FRAMES[0]}>
      <Arrow x={64} y={236} r={65} />
      <Arrow x={84} y={612} r={-15} />
      <Arrow x={150} y={708} />
      <Arrow x={184} y={762} r={180} />
      <Arrow x={626} y={580} />
    </g>
    <g transform={FRAMES[1]}>
      <Arrow x={498} y={54} />
      <Arrow x={537} y={176} r={180} />
      <Arrow x={502} y={282} />
      <Arrow x={540} y={470} r={180} />
      <Arrow x={537} y={592} r={180} />
      <Arrow x={551} y={650} r={170} />
      <Arrow x={506} y={756} />
      <Arrow x={1077} y={460} />
      <Arrow x={1102} y={512} r={180} />
    </g>

    {/* labels */}
    {labels.map((l, i) => (
      <g key={i} transform={FRAMES[l[0]]}>
        <Label l={l} />
      </g>
    ))}
    <g transform={FRAMES[0]}>
      <path id="heights" d="M366 350Q430 372 490 398Q580 440 616 496" fill="none" />
      <text fontSize="27" fill="#0a0a0a" stroke="#fff" strokeWidth="4" paintOrder="stroke">
        <textPath href="#heights" textLength="292" lengthAdjust="spacingAndGlyphs">
          Southern Heights Avenue
        </textPath>
      </text>
      <text x="805" y="117" fontSize="31" textLength="182" lengthAdjust="spacingAndGlyphs" fill="#777" stroke="#fff" strokeWidth="6" paintOrder="stroke">
        Potrero Hill
      </text>
      <g fontSize="28" fill="#7d5a3c" textAnchor="middle" stroke="#fff" strokeOpacity=".6" strokeWidth="4" paintOrder="stroke">
        <text x="741" y="692">Potrero</text>
        <text x="741" y="728">Hill</text>
        <text x="741" y="764">94 m</text>
      </g>
      <path d="M741 640l11 19h-22z" fill="#cf8850" />
      <path d="M315 333v42M300 349h30" stroke="#000" strokeWidth="6" />
      <path d="M728 484q-20 14-16 28 6 12 14 12-8-12 2-20 6-10 0-20zM736 494q-4 12 2 18 2 10-8 16 16-4 14-18-4-8-8-16z" fill="#734a08" />
      <path d="M920 18h52l-4 18-20 12-24-18z" fill="#734a08" />
      <path d="M930 26l18 14 22-10" stroke="#d8b98c" strokeWidth="2" fill="none" />
      <rect x="-20" y="478" width="144" height="41" rx="20" fill="#7e97ba" stroke="#fff" strokeWidth="6" />
      <rect x="-20" y="478" width="144" height="41" rx="20" fill="none" stroke="#6b84a8" strokeWidth="2" />
      <text x="22" y="508" fontSize="27" fontWeight="bold" fill="#fff" textLength="82" lengthAdjust="spacingAndGlyphs">
        S 101
      </text>
    </g>
    <g transform={FRAMES[1]}>
      <path id="turner" d="M66 590Q150 660 150 728" fill="none" />
      <text fontSize="27" fill="#0a0a0a" stroke="#fff" strokeWidth="4" paintOrder="stroke">
        <textPath href="#turner" textLength="160" lengthAdjust="spacingAndGlyphs">
          Turner Terrace
        </textPath>
      </text>
      <text x="365" y="20" transform="rotate(86 365 20)" fontSize="26">ue</text>
      <rect x="513" y="516" width="27" height="27" fill="#7a80b4" />
      <text x="429" y="498" fontSize="30" fontWeight="bold" textLength="198" lengthAdjust="spacingAndGlyphs" fill="#6363e6" stroke="#fff" strokeWidth="5" paintOrder="stroke">
        22nd Street
      </text>
      <text x="483" y="718" fontSize="34" fontStyle="italic" textLength="42" lengthAdjust="spacingAndGlyphs" fill="#7d7df0" stroke="#fff" strokeWidth="6" paintOrder="stroke">
        55
      </text>
      <rect x="1116" y="852" width="17" height="17" fill="#6c7cb5" />
      <text x="1046" y="831" fontSize="29" textLength="160" lengthAdjust="spacingAndGlyphs" fill="#7a7af0" stroke="#fff" strokeWidth="5" paintOrder="stroke">
        23rd Street
      </text>
      <path d="M930 378v42M915 399h30" stroke="#000" strokeWidth="6" />
      <path d="M475 888h42M490 892l26 26M516 892l-26 26" stroke="#333" strokeWidth="3" />
      <path d="M586 396l29 20-29 48-28-48z" fill="#f00" stroke="#200" strokeWidth="2.500" strokeLinejoin="round" />
      <circle cx="586" cy="422" r="5.500" />
    </g>
    <g transform={FRAMES[2]}>
      <text x="64" y="797" fontSize="44" fill="#0092da" stroke="#0092da" strokeWidth="1.500">
        P
      </text>
    </g>
  </svg>
);

const ZoomBtn = ({ d, r }: { d: string; r: string }) => (
  <div className={"flex h-[22px] w-[22px] items-center justify-center bg-[#5f85b7]/85 " + r}>
    <svg width="12" height="12" viewBox="0 0 12 12">
      <path d={d} stroke="#fff" strokeWidth="2.400" />
    </svg>
  </div>
);

/* ------------------------------------------------------------------ */
/* Desktop panel                                                       */
/* ------------------------------------------------------------------ */

const tasks: { t: string; w: string; on?: boolean; icon: React.ReactNode }[] = [
  { t: "Terminal", w: "w-[163px]", icon: <TermIcon size={15} /> },
  {
    t: "TransitTimes - [~/...",
    w: "w-[156px] tracking-[0.2px]",
    icon: (
      <svg width="15" height="16" viewBox="0 0 15 16">
        <circle cx="7.500" cy="8" r="7" fill="#86b552" />
        <path d="M4 14L7.500 5 11 14M5 11q2.500-3 5 0" fill="none" stroke="#e9f2dd" strokeWidth="1.500" />
        <circle cx="7.500" cy="4.500" r="1.800" fill="#41543a" />
      </svg>
    ),
  },
  { t: "TransitTimes - Go...", w: "w-[160px] tracking-[0.2px] mr-[9px]", on: true, icon: <Chrome size={15} /> },
  { t: "Pictures", w: "w-[164px]", icon: <GreenFolder size={15} /> },
  {
    t: "OpenShot - hack...",
    w: "w-[163px] tracking-[0.2px]",
    icon: (
      <svg width="15" height="16" viewBox="0 0 15 16">
        <rect width="15" height="16" fill="#333" />
        <path d="M1 0v16M14 0v16" stroke="#eee" strokeWidth="1.500" strokeDasharray="1.500 1.500" />
        <circle cx="7.500" cy="8" r="5" fill="#5288d0" />
        <path d="M6 5l4 3-4 3z" fill="#fff" />
      </svg>
    ),
  },
  { t: "Terminal", w: "w-[150px]", icon: <TermIcon size={15} /> },
];

const Tray = () => (
  <svg width="180" height="25" viewBox="0 0 180 25" className="block" fill="#d2d2d2">
    <path d="M7 6l1.700 4.600H13.500l-3.900 3 1.500 4.900L7 15.600l-4.100 2.900 1.500-4.900-3.900-3h4.800z" />
    <g transform="translate(29.500 12)" fill="none" stroke="#d2d2d2" strokeWidth="1.600">
      <circle r="6.300" />
      <path d="M-3-3L0 0l3.500-3.500" />
    </g>
    <circle cx="53" cy="12.500" r="6.500" />
    <path d="M53 8v5.500M53 15v2" stroke="#000" strokeWidth="2" />
    <path d="M79 6h10.500v13H79z" fill="none" stroke="#d2d2d2" strokeWidth="1.800" />
    <circle cx="84" cy="12" r="3.300" />
    <path d="M84 12l3.500 5" stroke="#d2d2d2" strokeWidth="2" />
    <g fill="none" stroke="#d2d2d2" strokeWidth="1.800">
      <path d="M101.500 10.500q6-5 12 0" opacity=".6" />
      <path d="M103.500 13.300q4-3.500 8 0M105.500 15.800q2-1.700 4 0" />
    </g>
    <circle cx="107.500" cy="17.500" r="1.300" />
    <path d="M123 10h2.500l3.500-3v11l-3.500-3H123z" />
    <path d="M131 9.500q2 3 0 6M133.500 8q3 4.500 0 9M136 6.500q4 6 0 12" fill="none" stroke="#d2d2d2" strokeWidth="1.500" />
    <circle cx="153.500" cy="12.500" r="3" fill="none" stroke="#d2d2d2" strokeWidth="1.600" />
    <path d="M153.500 5.500v2M153.500 17.500v2M146.500 12.500h2M158.500 12.500h2M148.600 7.600l1.300 1.300M157 16l1.300 1.300M158.400 7.600L157 8.900M150 16l-1.400 1.400" stroke="#d2d2d2" strokeWidth="1.500" />
    <path d="M170 7h3V5h4v2h3v13h-10z" fill="#7a7a7a" stroke="#ccc" />
    <path d="M178.500 9l-3 5h2l-1 5 3.500-6h-2z" />
  </svg>
);

function Panel() {
  return (
    <div className="flex h-[25px] items-center bg-black font-['Noto_Sans'] text-[13px] font-medium leading-none text-[#d4d4d4] shadow-[0_-1px_4px_rgba(0,0,0,0.25)]">
      <div className="flex w-[381px] shrink-0 items-center pl-[7px]">
        <svg width="16" height="16" viewBox="0 0 16 16">
          <circle cx="8" cy="8" r="4.600" fill="none" stroke="#c8c8c8" strokeWidth="1.800" />
          <circle cx="8" cy="8" r="6.500" fill="none" stroke="#c8c8c8" strokeWidth="2.600" strokeDasharray="2 3.100" />
        </svg>
        <span className="ml-[3px] w-[44px]">Menu</span>
        <svg width="22" height="18" viewBox="0 0 22 18">
          <path d="M0 0h22v18H0z" fill="#7ea05c" />
          <path d="M0 0h22v3H0z" fill="#e9e9e9" />
          <path d="M4 12h14v6H4z" fill="#4a4f40" />
        </svg>
        <span className="ml-[9px] flex items-center gap-[4px]">
          <GreenFolder size={19} />
          <svg width="18" height="18" viewBox="0 0 18 18">
            <rect width="18" height="18" rx="3" fill="#716a9f" />
            <circle cx="9" cy="9" r="7.500" fill="#433a75" />
            <path d="M1 7h16M1 10h16M2 13h14" stroke="#a9a3cf" />
          </svg>
          <Chrome size={18} />
          <TermIcon size={18} />
        </span>
      </div>
      {tasks.map((k, i) => (
        <div
          key={i}
          className={
            "flex h-[25px] shrink-0 items-center pl-[2px] " +
            k.w +
            (k.on ? " border-b-[3px] border-[#35b5e9] pl-[8px]! pt-[3px]" : "")
          }
        >
          <span className="w-[17px] shrink-0">{k.icon}</span>
          <span className={"whitespace-nowrap" + (i === 3 ? " pl-px" : "")}>{k.t}</span>
        </div>
      ))}
      <div className="ml-auto flex items-center">
        <div className="relative">
          <Tray />
          <span className="absolute left-[61px] top-[6px]">1</span>
        </div>
        <span className="ml-[4px] w-[45px]">100%</span>
        <svg width="46" height="16" viewBox="0 0 46 16">
          <path d="M0 7h3v3H0zM5 7h3v3H5zM10 7h3v3h-3z" fill="#ccc" />
          <path d="M23 3h9v7h-9zM34 6h3v8H27v-2" fill="none" stroke="#ccc" strokeWidth="1.800" />
        </svg>
        <span className="w-[115px] whitespace-nowrap">Thu Sep 17, 07:22</span>
      </div>
    </div>
  );
}

/* ------------------------------------------------------------------ */

const times = [
  "07:42:00 - San Francisco Caltrain Station",
  "08:42:00 - San Francisco Caltrain Station",
  "08:42:00 - San Francisco",
  "09:39:00 - San Francisco Caltrain Station",
  "09:42:00 - San Francisco",
];

export default function App() {
  return (
    <div className="flex h-[1080px] w-[1920px] flex-col overflow-hidden bg-white font-['Liberation_Sans',sans-serif] text-[14px] text-[#333]">
      <header className="h-[88px] shrink-0 bg-black font-['DejaVu_Sans',sans-serif]">
        <TabStrip />
        <Toolbar />
        <div className="mt-px">
          <Bookmarks />
        </div>
      </header>

      <div className="flex h-[175px] shrink-0 justify-center pt-[20px]">
        <div className="h-[136px] w-[138px] rounded-[11px] bg-[#fdfdfd] shadow-[0_3px_4px_rgba(0,0,0,0.3),0_1px_1px_rgba(0,0,0,0.15)]">
          <Logo />
        </div>
      </div>

      <nav className="flex h-[30px] shrink-0 items-center justify-center gap-[32px] bg-black text-[14px] font-bold text-white">
        <a>HOME</a>
        <a>ABOUT</a>
        <a>CONTACT</a>
      </nav>

      <main className="mx-auto w-[1140px] grow">
        <h3 className="mt-[60px] text-center text-[30px] leading-[33px] tracking-[0.07px]">
          Details for stop 22nd St Caltrain of Caltrain
        </h3>
        <div className="relative mx-auto mt-[10px] h-[300px] w-[1120px] overflow-hidden">
          <CityMap />
          <div className="absolute left-[8px] top-[8px] flex flex-col gap-px rounded-[4px] bg-white/40 p-[3px]">
            <ZoomBtn d="M0 6h12M6 0v12" r="rounded-t-[4px]" />
            <ZoomBtn d="M0 6h12" r="rounded-b-[4px]" />
          </div>
          <div className="absolute right-[3px] top-[233px] text-[12px] leading-[14px] tracking-[0.07px]">
            © <span className="text-[#428bca]">OpenStreetMap</span> contributors
          </div>
        </div>
        <h3 className="mt-[60px] text-[30px] leading-[33px] tracking-[0.1px]">Upcoming stop times:</h3>
        <ul className="mt-[10px] rounded-[4px] border border-[#ddd] tracking-[0.12px] text-[#555]">
          {times.map((t, i) => (
            <li key={i} className={"flex h-[41px] items-center pl-[15px] " + (i < 4 ? "border-b border-[#ddd]" : "")}>
              {t}
            </li>
          ))}
        </ul>
        <p className="mt-[24px] text-center leading-[20px] tracking-[0.15px]">
          © 2015 Andrey Kurenkov. Powered by <span className="text-[#428bca]">Django</span>,{" "}
          <span className="text-[#428bca]">OpenStreetMaps</span>, and the <span className="text-[#428bca]">MultiGTFS</span> package.
        </p>
      </main>

      <Panel />
    </div>
  );
}
